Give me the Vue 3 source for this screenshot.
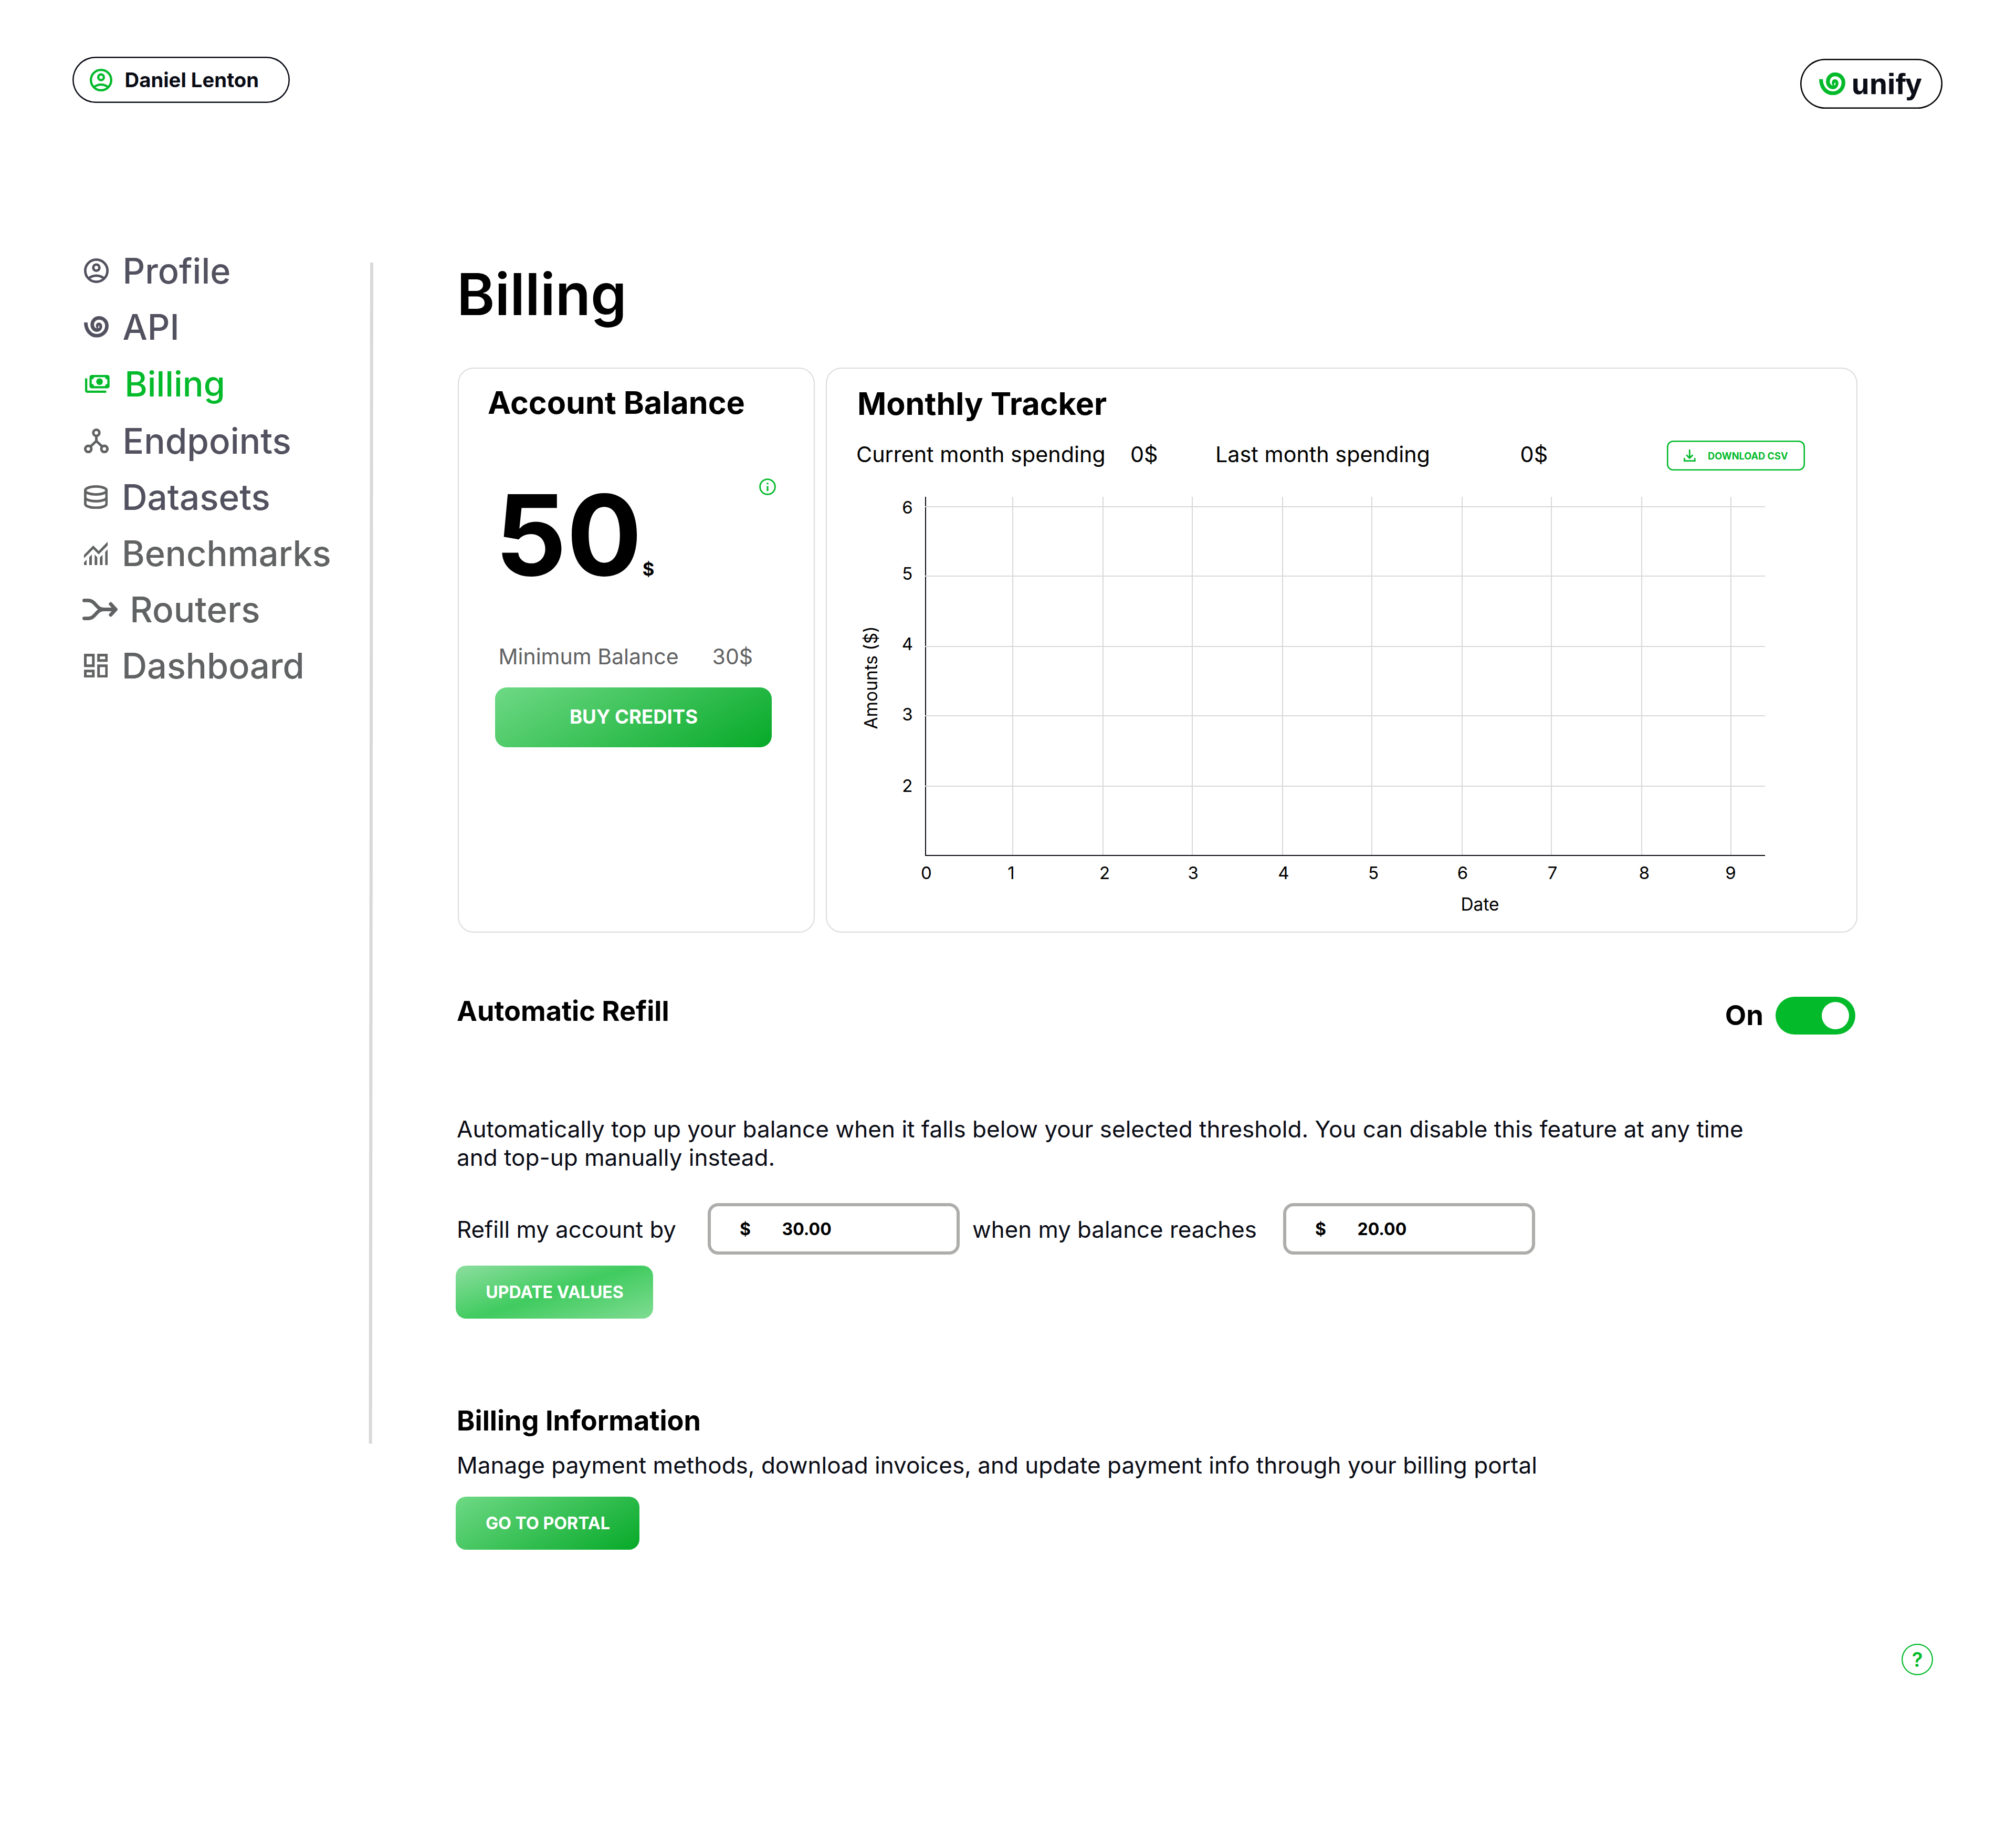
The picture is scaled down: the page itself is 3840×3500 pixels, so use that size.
<script setup>
import { ref } from 'vue'

const navItems = [
  { id: 'profile', label: 'Profile' },
  { id: 'api', label: 'API' },
  { id: 'billing', label: 'Billing', active: true },
  { id: 'endpoints', label: 'Endpoints' },
  { id: 'datasets', label: 'Datasets' },
  { id: 'benchmarks', label: 'Benchmarks' },
  { id: 'routers', label: 'Routers' },
  { id: 'dashboard', label: 'Dashboard' }
]

const columns = [1929, 2101, 2271, 2443, 2613, 2785, 2955, 3127, 3297]
const rows = [965, 1097, 1231, 1363, 1497]
const xLabels = [1764.5, 1926, 2104, 2272.7, 2445, 2616, 2786, 2957, 3132, 3296.5]
const yLabels = [
  { value: 6, y: 977.7 },
  { value: 5, y: 1103.7 },
  { value: 4, y: 1238 },
  { value: 3, y: 1372 },
  { value: 2, y: 1507.7 }
]

const autoRefill = ref(true)
</script>

<template>
  <div class="page">
    <header class="topbar">
      <button class="pill user">
        <svg class="user-icon" viewBox="2 2 20 20" fill="none" stroke="currentColor" stroke-width="2">
          <circle cx="12" cy="12" r="9" />
          <circle cx="12" cy="9.5" r="2.5" />
          <path d="M5.6 18.4C7.4 16.8 9.7 16 12 16s4.6.8 6.4 2.4" />
        </svg>
        <span>Daniel Lenton</span>
      </button>
      <div class="pill brand">
        <svg class="brand-icon" viewBox="0 0 150 130" fill="none" stroke="currentColor">
          <path stroke-width="21.5" d="M10.8 38C10.8 86 40 119 78 119c35 0 61-27 61-61 0-27-21-47-48-47-25 0-41 19-41 41 0 19 13 33 29 33 6 0 11-2 15-6" />
          <path stroke-width="17" d="M87 84c12-4 16-15 15-24-1-8-6-12.5-12-12.5-6 0-9.5 5-9 11 0 4 2 8 5 9" />
        </svg>
        <span class="brand-name">unify</span>
      </div>
    </header>

    <div class="body">
      <nav class="sidebar">
        <a v-for="item in navItems" :key="item.id" class="nav-item" :class="[item.id, { active: item.active }]">
          <svg v-if="item.id === 'profile'" class="nav-icon" viewBox="2 2 20 20" fill="none" stroke="currentColor" stroke-width="2">
            <circle cx="12" cy="12" r="9" />
            <circle cx="12" cy="9.5" r="2.5" />
            <path d="M5.6 18.4C7.4 16.8 9.7 16 12 16s4.6.8 6.4 2.4" />
          </svg>
          <svg v-else-if="item.id === 'api'" class="nav-icon" viewBox="0 0 150 130" fill="none" stroke="currentColor">
            <path stroke-width="21.5" d="M10.8 38C10.8 86 40 119 78 119c35 0 61-27 61-61 0-27-21-47-48-47-25 0-41 19-41 41 0 19 13 33 29 33 6 0 11-2 15-6" />
            <path stroke-width="17" d="M87 84c12-4 16-15 15-24-1-8-6-12.5-12-12.5-6 0-9.5 5-9 11 0 4 2 8 5 9" />
          </svg>
          <svg v-else-if="item.id === 'billing'" class="nav-icon" viewBox="0 0 22 16" fill="currentColor">
            <path fill-rule="evenodd" d="M6 0h14a2 2 0 0 1 2 2v8a2 2 0 0 1-2 2H6a2 2 0 0 1-2-2V2a2 2 0 0 1 2-2zm2 2a2 2 0 0 1-2 2v4a2 2 0 0 1 2 2h10a2 2 0 0 1 2-2V4a2 2 0 0 1-2-2z" />
            <circle cx="13" cy="6" r="3" />
            <path d="M0 3h2v11h17v2H2a2 2 0 0 1-2-2z" />
          </svg>
          <svg v-else-if="item.id === 'endpoints'" class="nav-icon" viewBox="0 0 47 47" fill="none" stroke="currentColor" stroke-width="4.9">
            <circle cx="23.5" cy="8.2" r="5.8" />
            <circle cx="8.2" cy="38.8" r="5.8" />
            <circle cx="38.8" cy="38.8" r="5.8" />
            <path d="M23.5 14v11M12.2 34.500 23.500 23.800l11.300 10.700" />
          </svg>
          <svg v-else-if="item.id === 'datasets'" class="nav-icon" viewBox="0 0 45.4 45.4" fill="none" stroke="currentColor" stroke-width="4.9">
            <ellipse cx="22.7" cy="10" rx="20.3" ry="7.6" />
            <path d="M2.4 10v25.400c0 4.200 9 7.600 20.300 7.600S43 39.600 43 35.400V10M2.400 23c0 4.200 9 7.400 20.300 7.400S43 27.200 43 23" />
          </svg>
          <svg v-else-if="item.id === 'benchmarks'" class="nav-icon" viewBox="0 0 45.4 45.4" fill="currentColor">
            <path d="M0 25.700 17.600 7.700 28 18.300 45.400 0v7.300L28 24.700 17.600 14.500 0 32z" />
            <path d="M0 40l5-5.300v10.700H0zM10 30l5-5v20.400h-5zM20.300 25l5 5.200v15.200h-5zM30.300 30.500l5-5v19.900h-5zM40.400 20l5-5.300v30.700h-5z" />
          </svg>
          <svg v-else-if="item.id === 'routers'" class="nav-icon" viewBox="0 0 67.3 41" fill="none" stroke="currentColor" stroke-width="6.8" stroke-linecap="round" stroke-linejoin="round">
            <path d="M3.400 3.400h7C26 3.400 25 20.500 41 20.500H63M3.400 37.600h7C26 37.600 25 20.500 41 20.500M53.800 10.200 63.500 20.500l-9.700 10.300" />
          </svg>
          <svg v-else class="nav-icon" viewBox="0 0 45.4 45.4" fill="none" stroke="currentColor" stroke-width="5">
            <path d="M2.500 2.500h15.300v20.300H2.500zM27.700 2.500h15.200v10.300H27.700zM2.500 32.800h15.300v10.100H2.500zM27.700 22.800h15.200v20.100H27.700z" />
          </svg>
          <span>{{ item.label }}</span>
        </a>
      </nav>

      <div class="divider"></div>

      <main class="content">
        <h1 class="title">Billing</h1>

        <div class="cards">
          <section class="card balance">
            <h2 class="card-title">Account Balance</h2>
            <div class="balance-body">
              <div class="amount-row">
                <div class="amount"><span class="value">50</span><span class="unit">$</span></div>
                <svg class="info" viewBox="0 0 32 32" fill="none" stroke="currentColor" stroke-width="2.8">
                  <circle cx="16" cy="16" r="14.4" />
                  <path stroke-width="3.2" d="M16 14.800v9.200M16 8.300v2.900" />
                </svg>
              </div>
              <div class="minimum"><span>Minimum Balance</span><span>30$</span></div>
              <button class="btn buy">BUY CREDITS</button>
            </div>
          </section>

          <section class="card tracker">
            <h2 class="card-title">Monthly Tracker</h2>
            <div class="stats">
              <span>Current month spending</span>
              <span>0$</span>
              <span>Last month spending</span>
              <span>0$</span>
              <button class="download">
                <svg class="download-icon" viewBox="0 0 22.6 23" fill="none" stroke="currentColor" stroke-width="2.8">
                  <path d="M11.300 0v16M5.200 10.200l6.100 6.200 6.100-6.200M1.400 16.200v5.400h19.800v-5.400" />
                </svg>
                <span>DOWNLOAD CSV</span>
              </button>
            </div>
            <svg class="chart" viewBox="1575 896 1961 877">
              <g class="axis">
                <path d="M1763 946v683" />
              </g>
              <g class="grid">
                <path v-for="x in columns" :key="'c' + x" :d="`M${x} 946V1628`" />
                <path v-for="y in rows" :key="'r' + y" :d="`M1762 ${y}H3362`" />
              </g>
              <g class="axis">
                <path d="M1762 1629H3362" />
              </g>
              <g class="labels">
                <text v-for="(x, i) in xLabels" :key="'x' + i" :x="x" y="1673.5">{{ i }}</text>
                <text v-for="l in yLabels" :key="'y' + l.value" x="1728.4" :y="l.y">{{ l.value }}</text>
                <text class="axis-name" x="2819" y="1733.5">Date</text>
                <text class="axis-name" transform="translate(1671 1290.500) rotate(-90)">Amounts ($)</text>
              </g>
            </svg>
          </section>
        </div>

        <section class="refill">
          <div class="refill-head">
            <h3 class="section-title">Automatic Refill</h3>
            <div class="switch-group">
              <span class="switch-label">{{ autoRefill ? 'On' : 'Off' }}</span>
              <button class="switch" :class="{ on: autoRefill }" @click="autoRefill = !autoRefill">
                <span class="knob"></span>
              </button>
            </div>
          </div>
          <p class="text refill-text">
            Automatically top up your balance when it falls below your selected threshold. You can disable this feature at any time<br />and top-up manually instead.
          </p>
          <div class="form-row">
            <span class="form-label by">Refill my account by</span>
            <div class="field"><span class="currency">$</span><span>30.00</span></div>
            <span class="form-label when">when my balance reaches</span>
            <div class="field"><span class="currency">$</span><span>20.00</span></div>
          </div>
          <button class="btn update">UPDATE VALUES</button>
        </section>

        <section class="info-section">
          <h3 class="section-title">Billing Information</h3>
          <p class="text manage">Manage payment methods, download invoices, and update payment info through your billing portal</p>
          <button class="btn portal">GO TO PORTAL</button>
        </section>
      </main>
    </div>

    <button class="help">?</button>
  </div>
</template>

<style>
body {
  margin: 0;
  background: #fff;
}
</style>

<style scoped>
.page {
  position: relative;
  box-sizing: border-box;
  width: 3840px;
  height: 3500px;
  overflow: hidden;
  background: #fff;
  color: #000;
  font-family: Inter, "Liberation Sans", sans-serif;
}
.page *,
.page *::before {
  box-sizing: border-box;
}
h1,
h2,
h3,
p {
  margin: 0;
}
button {
  margin: 0;
  padding: 0;
  border: 0;
  background: none;
  font-family: inherit;
  white-space: nowrap;
}
svg {
  display: block;
  flex: none;
}

.topbar {
  display: flex;
  justify-content: space-between;
  align-items: flex-start;
  height: 462px;
  padding: 108px 140px 0 138px;
}
.pill {
  display: flex;
  align-items: center;
  background: #fff;
}
.user {
  width: 414px;
  height: 88px;
  padding-left: 33px;
  border-radius: 44px;
  box-shadow: inset 0 0 0 2.5px #0a0c16;
  color: #0a0c16;
  font-size: 38.3px;
  font-weight: 700;
  line-height: 46px;
}
.user-icon {
  width: 43px;
  height: 43px;
  margin-right: 23.5px;
  color: #02ba2a;
}
.brand {
  width: 271px;
  height: 95px;
  margin-top: 4px;
  padding-left: 36px;
  border-radius: 48px;
  box-shadow: inset 0 0 0 2.5px #000;
}
.brand-icon {
  width: 50px;
  height: 43.3px;
  margin-right: 12px;
  color: #02ba2a;
}
.brand-name {
  color: #0a0c16;
  font: 700 55px/64px "Liberation Sans", Arial, sans-serif;
  letter-spacing: 0.4px;
  -webkit-text-stroke: 0.6px #0a0c16;
}

.body {
  display: flex;
  align-items: flex-start;
}
.sidebar {
  display: grid;
  grid-template-rows: 107px 107px 110px repeat(5, 107px);
  flex: none;
  width: 705px;
  padding-left: 160px;
}
.nav-item {
  display: flex;
  align-items: center;
  gap: 26.5px;
  color: #616263;
  font-size: 66.7px;
  font-weight: 500;
  line-height: 80px;
}
.nav-icon {
  width: 45.4px;
  height: 45.4px;
}
.profile,
.api,
.endpoints,
.datasets {
  color: #52515f;
}
.endpoints,
.datasets,
.routers {
  font-size: 67.4px;
}
.endpoints .nav-icon,
.datasets .nav-icon {
  color: #616263;
}
.profile .nav-icon,
.endpoints .nav-icon {
  width: 47px;
  height: 47px;
}
.api .nav-icon {
  width: 47px;
  height: 40.7px;
}
.active {
  gap: 28.500px;
  padding-left: 2px;
  color: #02ba2a;
  font-size: 66.4px;
}
.billing .nav-icon {
  width: 46.7px;
  height: 34px;
}
.routers {
  gap: 23.5px;
  margin-left: -3.5px;
}
.routers .nav-icon {
  width: 67.3px;
  height: 41px;
}
.divider {
  flex: none;
  width: 6px;
  height: 2249px;
  margin-top: 38px;
  background: #d9d9d9;
  transform: rotate(0.06deg);
  transform-origin: top center;
}

.content {
  width: 2670px;
  margin-left: 159px;
  padding-top: 32px;
}
.title {
  font-size: 110px;
  font-weight: 600;
  line-height: 132px;
}
.cards {
  display: flex;
  gap: 21px;
  height: 1076px;
  margin: 74px 0 0 2px;
}
.card {
  flex: none;
  border: 2px solid #dcdcdc;
  border-radius: 30px;
}
.card-title {
  font-size: 59.3px;
  font-weight: 700;
  line-height: 72px;
}
.balance {
  width: 680px;
  padding-top: 28.5px;
}
.balance .card-title {
  margin-left: 55px;
}
.balance-body {
  width: 535px;
  margin: 108.5px 0 0 69px;
}
.amount-row {
  display: flex;
  justify-content: space-between;
  height: 216px;
}
.amount {
  display: flex;
  align-items: baseline;
  font-weight: 700;
}
.value {
  font-size: 213px;
  line-height: 216px;
}
.unit {
  margin-left: 1px;
  font-size: 34.5px;
  line-height: 36px;
}
.info {
  width: 32px;
  height: 32px;
  color: #02ba2a;
}
.minimum {
  display: flex;
  gap: 64px;
  margin: 98px 0 0 6.5px;
  color: #616263;
  font-size: 41px;
  line-height: 50px;
}
.btn {
  display: block;
  color: #fff;
  font-weight: 700;
  text-align: center;
}
.buy {
  width: 527px;
  height: 114px;
  margin-top: 34px;
  padding: 0 0 3px 1px;
  border-radius: 22px;
  background: linear-gradient(150deg, #6cd883 2%, #08aa2a 98%);
  font-size: 36.5px;
}
.tracker {
  width: 1965px;
  padding-top: 30.5px;
}
.tracker .card-title {
  margin-left: 58px;
}
.stats {
  display: grid;
  grid-template-columns: 522px 162px 580.6px 279.4px 263px;
  align-items: start;
  height: 57px;
  margin: 34.5px 0 0 56px;
  font-size: 41.3px;
  line-height: 52px;
}
.download {
  display: flex;
  align-items: center;
  height: 57px;
  padding-left: 32px;
  border-radius: 12px;
  box-shadow: inset 0 0 0 2.6px #02ba2a;
  color: #02ba2a;
  font-size: 18.2px;
  font-weight: 700;
  line-height: 22px;
}
.download-icon {
  width: 22.6px;
  height: 23px;
  margin-right: 23.5px;
}
.chart {
  width: 1961px;
  height: 877px;
}
.grid path {
  stroke: #d9d9d9;
  stroke-width: 2px;
}
.axis path {
  stroke: #0a0c12;
  stroke-width: 2px;
}
.labels text {
  font-size: 33px;
  text-anchor: middle;
}
.labels .axis-name {
  font-size: 33.5px;
}

.refill {
  margin-top: 122px;
}
.refill-head {
  display: flex;
  justify-content: space-between;
  align-items: flex-start;
  height: 72px;
  padding-right: 6px;
}
.section-title {
  font-size: 52.2px;
  font-weight: 700;
  line-height: 64px;
}
.refill-head .section-title {
  margin-top: -5px;
}
.switch-group {
  display: flex;
  align-items: center;
  gap: 23px;
  height: 72px;
}
.switch-label {
  margin-top: -2px;
  font-size: 52.5px;
  font-weight: 700;
  line-height: 64px;
}
.switch {
  display: flex;
  align-items: center;
  width: 152px;
  height: 72px;
  padding: 0 12px;
  border-radius: 36px;
  background: #adadac;
}
.switch.on {
  justify-content: flex-end;
  background: #02ba2a;
}
.knob {
  width: 52px;
  height: 52px;
  border-radius: 50%;
  background: #fff;
}
.text {
  color: #0a0c16;
  font-size: 44.04px;
  line-height: 54px;
  white-space: nowrap;
}
.refill-text {
  margin-top: 153px;
}
.form-row {
  display: flex;
  align-items: center;
  height: 98px;
  margin-top: 60px;
}
.form-label {
  color: #0a0c16;
  font-size: 43.8px;
  line-height: 54px;
  padding-top: 3px;
  white-space: nowrap;
}
.by {
  width: 478px;
}
.when {
  width: 592px;
  margin-left: 24px;
}
.field {
  display: flex;
  align-items: center;
  flex: none;
  width: 480px;
  height: 98px;
  padding: 2px 0 0 55px;
  border: 6px solid #adadac;
  border-radius: 20px;
  font-size: 32px;
  font-weight: 700;
  line-height: 40px;
}
.currency {
  width: 80.5px;
}
.update {
  width: 376px;
  height: 101px;
  margin: 20.5px 0 0 -2px;
  padding-left: 1px;
  border-radius: 20px;
  background: linear-gradient(162deg, #88dd9b 3%, #40cb5f 50%, #7ddb90 98%);
  font-size: 32px;
}
.info-section {
  margin-top: 162.5px;
}
.manage {
  margin-top: 26px;
}
.portal {
  width: 350px;
  height: 101px;
  margin: 32.5px 0 0 -2px;
  padding-left: 1px;
  border-radius: 20px;
  background: linear-gradient(150deg, #6cd883 2%, #08aa2a 98%);
  font-size: 32.2px;
}
.help {
  position: absolute;
  top: 3130px;
  right: 158px;
  width: 60px;
  height: 60px;
  border-radius: 50%;
  box-shadow: inset 0 0 0 2.2px #02ba2a;
  color: #02ba2a;
  font-size: 38px;
  font-weight: 600;
  line-height: 60px;
}
</style>
